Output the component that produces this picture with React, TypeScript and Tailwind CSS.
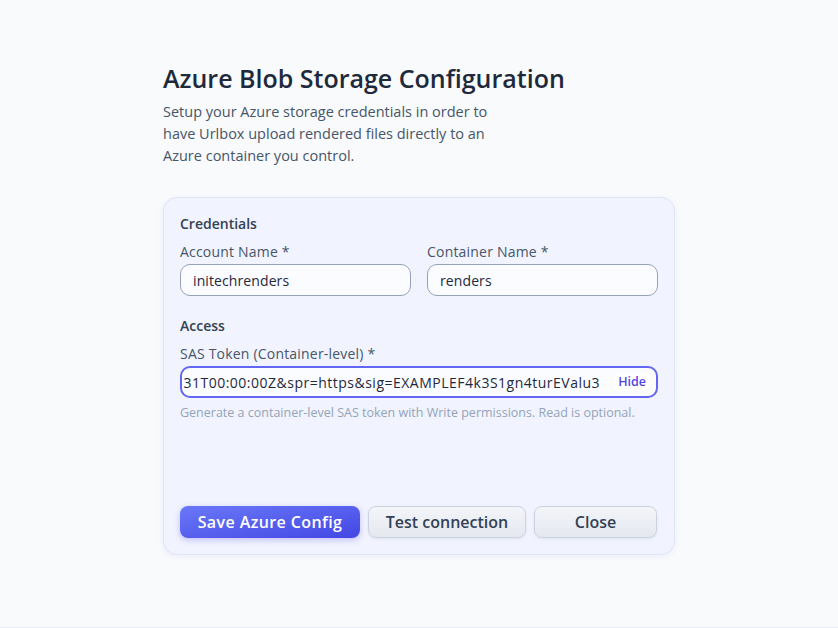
import React from "react";

const tokenTail = "31T00:00:00Z&spr=https&sig=EXAMPLEF4k3S1gn4turEValu3";

function Field({ label, value }: { label: string; value: string }) {
  return (
    <div className="flex flex-col">
      <label className="text-[14px] leading-[20px] tracking-[0.2px] text-[#475569]">{label}</label>
      <div className="mt-[2px] h-[32px] rounded-[10px] border border-[#94a3b8] bg-[#fbfcff] px-[12px] flex items-center text-[14px] tracking-[0.1px] text-[#1e293b]">
        {value}
      </div>
    </div>
  );
}

export default function App() {
  return (
    <div
      className="min-h-[628px] bg-[#f8fafc] border-b border-[#e6ebf5]"
      style={{ fontFamily: "'Open Sans', 'Noto Sans', sans-serif" }}
    >
      <div className="ml-[163px] pt-[62px] w-[512px]">
        <h1 className="text-[25px] leading-[32px] font-semibold text-[#1e293b]">
          Azure Blob Storage Configuration
        </h1>
        <p className="mt-[7px] w-[340px] text-[14.5px] leading-[22px] text-[#475569]">
          Setup your Azure storage credentials in order to have Urlbox upload rendered files directly to an Azure
          container you control.
        </p>

        <div className="mt-[30px] rounded-[14px] border border-[#dde5f7] bg-[#f1f4fe] px-[16px] pt-[16px] pb-[16px] shadow-[0_2px_6px_rgba(99,102,241,0.08)]">
          <h2 className="text-[14px] leading-[20px] font-semibold text-[#334155]">Credentials</h2>
          <div className="mt-[8px] grid grid-cols-2 gap-[16px]">
            <Field label="Account Name *" value="initechrenders" />
            <Field label="Container Name *" value="renders" />
          </div>

          <h2 className="mt-[20px] text-[14px] leading-[20px] font-semibold text-[#334155]">Access</h2>
          <label className="mt-[8px] block text-[14px] leading-[20px] tracking-[0.2px] text-[#475569]">
            SAS Token (Container-level) *
          </label>
          <div className="mt-[2px] h-[32px] rounded-[10px] border-2 border-[#6366f1] bg-[#fbfcff] pl-[1px] pr-[6px] flex items-center">
            <div className="flex-1 overflow-hidden flex justify-end">
              <span className="whitespace-nowrap text-[14px] tracking-[0.5px] text-[#1e293b]">{tokenTail}</span>
            </div>
            <button className="ml-[14px] rounded-[6px] bg-white px-[4px] text-[12.5px] font-semibold text-[#4f46e5]">
              Hide
            </button>
          </div>
          <p className="mt-[7px] text-[12.5px] leading-[16px] text-[#94a3b8]">
            Generate a container-level SAS token with Write permissions. Read is optional.
          </p>

          <div className="mt-[85px] flex gap-[8px]">
            <button className="h-[32px] w-[180px] rounded-[8px] bg-gradient-to-br from-[#6b77f7] to-[#4446e4] text-[16px] tracking-[0.4px] font-semibold text-white shadow-[0_2px_6px_rgba(79,70,229,0.3)]">
              Save Azure Config
            </button>
            <button className="h-[32px] w-[158px] rounded-[8px] border border-[#cbd3e0] bg-gradient-to-b from-[#f3f5f9] to-[#e4e8ef] text-[16px] font-semibold text-[#334155] shadow-[0_1px_3px_rgba(15,23,42,0.08)]">
              Test connection
            </button>
            <button className="h-[32px] w-[123px] rounded-[8px] border border-[#cbd3e0] bg-gradient-to-b from-[#f3f5f9] to-[#e4e8ef] text-[16px] font-semibold text-[#334155] shadow-[0_1px_3px_rgba(15,23,42,0.08)]">
              Close
            </button>
          </div>
        </div>
      </div>
    </div>
  );
}
